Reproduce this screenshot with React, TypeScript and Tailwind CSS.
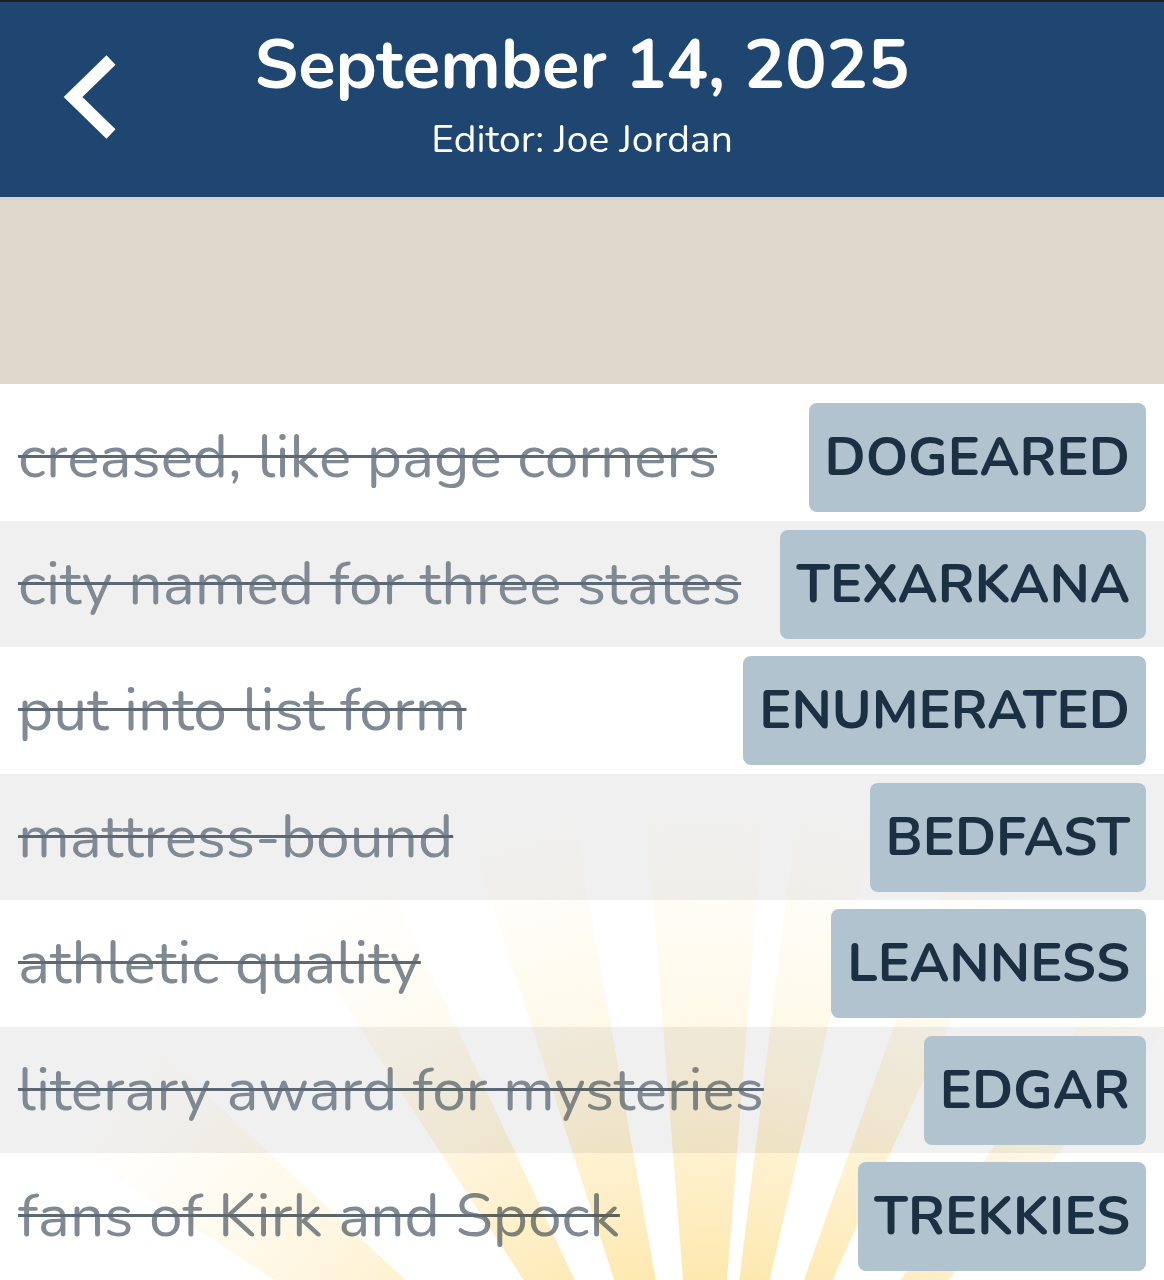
const clues = [
  { clue: "creased, like page corners", answer: "DOGEARED" },
  { clue: "city named for three states", answer: "TEXARKANA" },
  { clue: "put into list form", answer: "ENUMERATED" },
  { clue: "mattress-bound", answer: "BEDFAST" },
  { clue: "athletic quality", answer: "LEANNESS" },
  { clue: "literary award for mysteries", answer: "EDGAR" },
  { clue: "fans of Kirk and Spock", answer: "TREKKIES" },
];

// faint sunburst behind the bottom rows: [angle from vertical, half width], degrees
const rays: [number, number][] = [
  [-52, 5],
  [-29, 4],
  [-14, 4],
  [0, 4.5],
  [10, 3],
  [22, 2.5],
  [38, 3],
];

const CX = 705;
const CY = 1176;

const rayPoints = (deg: number, half: number) => {
  const len = 1200;
  const a = ((deg - half) * Math.PI) / 180;
  const b = ((deg + half) * Math.PI) / 180;
  return `${CX},${CY} ${CX + Math.sin(a) * len},${CY - Math.cos(a) * len} ${CX + Math.sin(b) * len},${CY - Math.cos(b) * len}`;
};

const Sunburst = () => (
  <svg
    className="pointer-events-none absolute inset-0 h-full w-full mix-blend-multiply"
    viewBox="0 0 1164 896"
    preserveAspectRatio="none"
  >
    <defs>
      <radialGradient id="glow" cx={CX} cy={CY} r="760" gradientUnits="userSpaceOnUse">
        <stop offset="0.35" stopColor="#fcd772" stopOpacity="0.6" />
        <stop offset="0.65" stopColor="#fde3a0" stopOpacity="0.32" />
        <stop offset="1" stopColor="#fff2cc" stopOpacity="0" />
      </radialGradient>
    </defs>
    {rays.map(([r, h]) => (
      <polygon key={r} points={rayPoints(r, h)} fill="url(#glow)" />
    ))}
  </svg>
);

export default function App() {
  return (
    <div className="w-[1164px] h-[1280px] overflow-hidden bg-white font-['Nunito','Open_Sans',sans-serif]">
      <div className="border-t-2 border-[#1b1f24] bg-[#1e4670] h-[197px] relative flex flex-col items-center text-white">
        <button className="absolute left-[58px] top-[48px] w-[62px] h-[92px] flex items-center justify-center">
          <svg viewBox="0 0 60 90" className="w-[60px] h-[90px]">
            <path d="M52 9 L14 46 L52 83" fill="none" stroke="white" strokeWidth="13" strokeLinejoin="miter" />
          </svg>
        </button>
        <h1 className="mt-[22px] text-[69px] leading-[82px] font-bold">September 14, 2025</h1>
        <div className="mt-[11px] text-[39px] leading-[46px]">Editor: Joe Jordan</div>
      </div>
      <div className="h-[3px] bg-[#d6d2c9]" />
      <div className="h-[184px] bg-[#dfd8cb]" />
      <div className="relative pt-[10px]">
        {clues.map((c, i) => (
          <div
            key={c.answer}
            className={`h-[126.5px] flex items-start justify-between pl-[18px] pr-[18px] ${i % 2 === 1 ? "bg-[#f0f0f0]" : "bg-white"}`}
          >
            <span className="self-center text-[60.5px] leading-[72px] text-[#7f8a95] line-through decoration-[#5c6873] decoration-[3px] whitespace-nowrap">
              {c.clue}
            </span>
            <span className="relative z-10 mt-[9px] h-[109px] flex items-center rounded-[8px] bg-[#b1c3cf] px-[16px] text-[54px] font-bold text-[#1c3043] whitespace-nowrap">
              {c.answer}
            </span>
          </div>
        ))}
        <Sunburst />
      </div>
    </div>
  );
}
